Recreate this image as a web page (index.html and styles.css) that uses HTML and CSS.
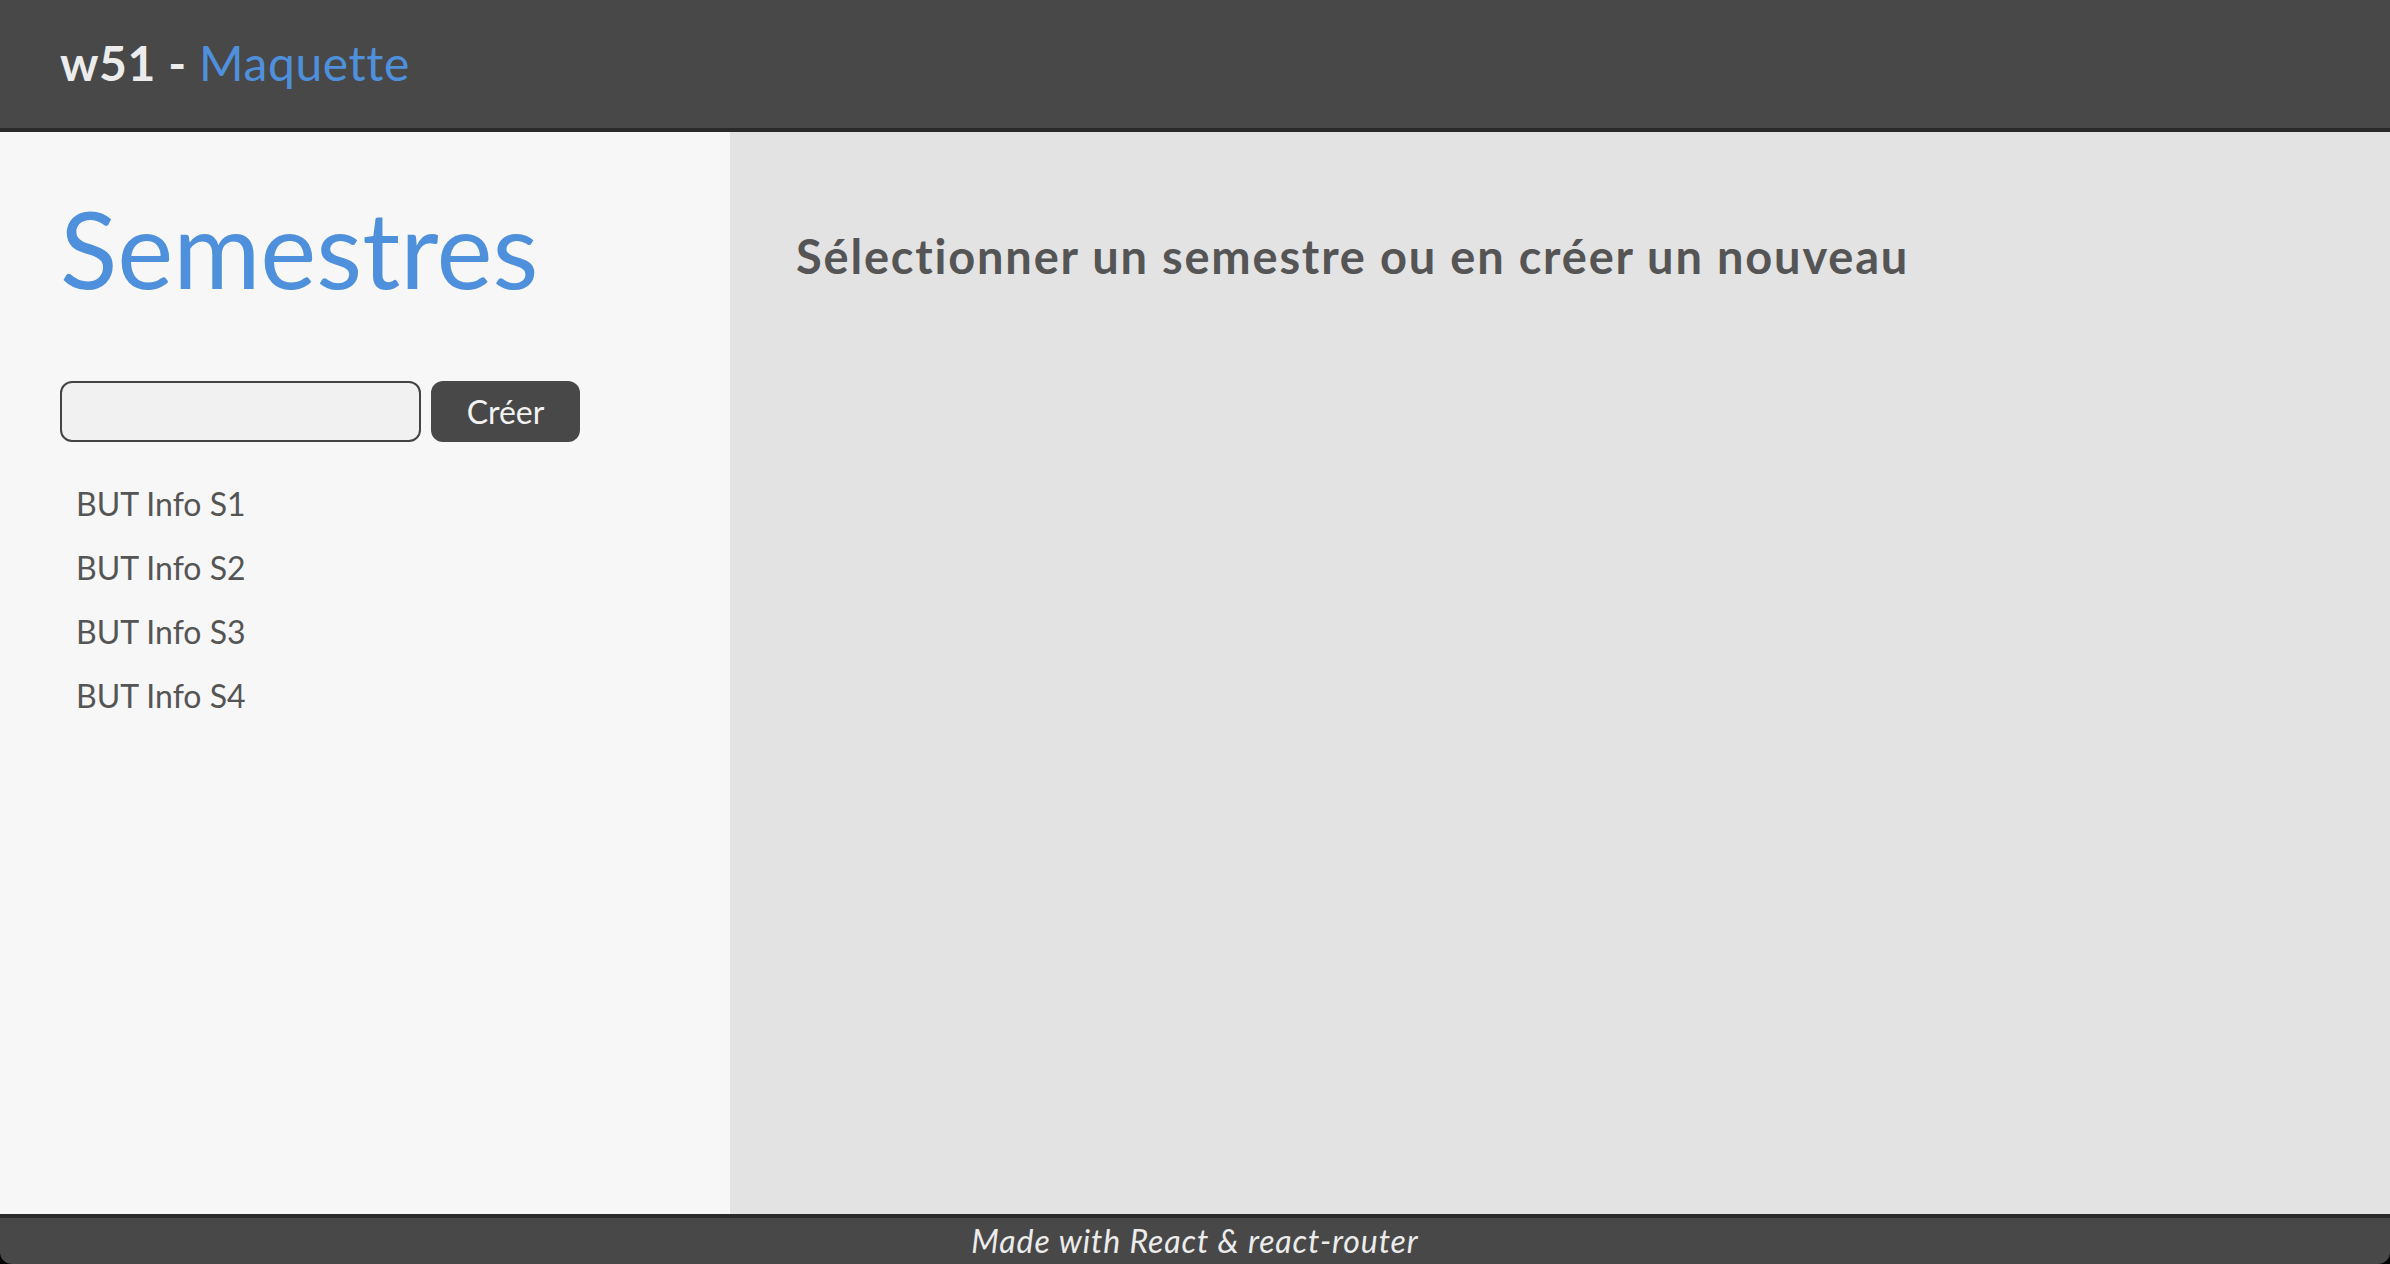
FILE: index.html
```html
<!DOCTYPE html>
<html lang="fr">
<head>
<meta charset="utf-8">
<title>w51 - Maquette</title>
<link rel="stylesheet" href="styles.css">
</head>
<body>
<div class="app">
  <header class="topbar">
    <span class="brand">w51 - </span><span class="brand-accent">Maquette</span>
  </header>
  <div class="content">
    <aside class="sidebar">
      <h1 class="sidebar-title">Semestres</h1>
      <form class="create-form">
        <input class="create-input" type="text">
        <button class="create-btn" type="button">Créer</button>
      </form>
      <ul class="semester-list">
        <li class="semester-item">BUT Info S1</li>
        <li class="semester-item">BUT Info S2</li>
        <li class="semester-item">BUT Info S3</li>
        <li class="semester-item">BUT Info S4</li>
      </ul>
    </aside>
    <main class="main">
      <h2 class="main-title">Sélectionner un semestre ou en créer un nouveau</h2>
    </main>
  </div>
  <footer class="footer">Made with React &amp; react-router</footer>
</div>
</body>
</html>
```

FILE: styles.css
```css
html, body {
  margin: 0;
  padding: 0;
  background: #000;
}
body {
  font-family: Lato, "Noto Sans", sans-serif;
}
.app {
  display: flex;
  flex-direction: column;
  height: 100vh;
}
.topbar {
  box-sizing: border-box;
  height: 132px;
  background: #484848;
  border-bottom: 4px solid #2a2a2a;
  padding: 39px 0 0 60px;
  font-size: 48px;
  line-height: 1;
  letter-spacing: 0.6px;
  flex: none;
}
.brand {
  color: #ececec;
  font-weight: 700;
}
.brand-accent {
  color: #4f90dd;
  font-weight: 400;
}
.content {
  flex: 1;
  display: flex;
  min-height: 0;
}
.sidebar {
  width: 730px;
  flex: none;
  box-sizing: border-box;
  background: #f7f7f7;
  padding: 0 60px;
}
.sidebar-title {
  margin: 63px 0 0 0;
  font-size: 106px;
  line-height: 1;
  font-weight: 400;
  color: #4f90dd;
}
.create-form {
  display: flex;
  gap: 10px;
  margin-top: 80px;
}
.create-input {
  box-sizing: border-box;
  width: 361px;
  height: 61px;
  border: 2px solid #444;
  border-radius: 12px;
  background: #f1f1f1;
  padding: 0 12px;
  font-family: inherit;
  font-size: 30px;
}
.create-btn {
  box-sizing: border-box;
  width: 149px;
  height: 61px;
  border: none;
  border-radius: 12px;
  background: #484848;
  color: #f2f2f2;
  font-family: inherit;
  font-size: 32px;
  padding: 0;
}
.semester-list {
  list-style: none;
  margin: 30px 0 0 0;
  padding: 0 0 0 16px;
}
.semester-item {
  font-size: 32px;
  line-height: 64px;
  color: #555;
}
.main {
  flex: 1;
  background: #e3e3e3;
  padding: 0 0 0 66px;
}
.main-title {
  margin: 101px 0 0 0;
  font-size: 47px;
  line-height: 1;
  font-weight: 700;
  letter-spacing: 1.8px;
  color: #555;
}
.footer {
  flex: none;
  height: 50px;
  box-sizing: border-box;
  border-top: 4px solid #2a2a2a;
  background: #484848;
  border-radius: 0 0 12px 12px;
  color: #ececec;
  font-style: italic;
  font-size: 32px;
  line-height: 45px;
  letter-spacing: 0.9px;
  text-align: center;
}
```
